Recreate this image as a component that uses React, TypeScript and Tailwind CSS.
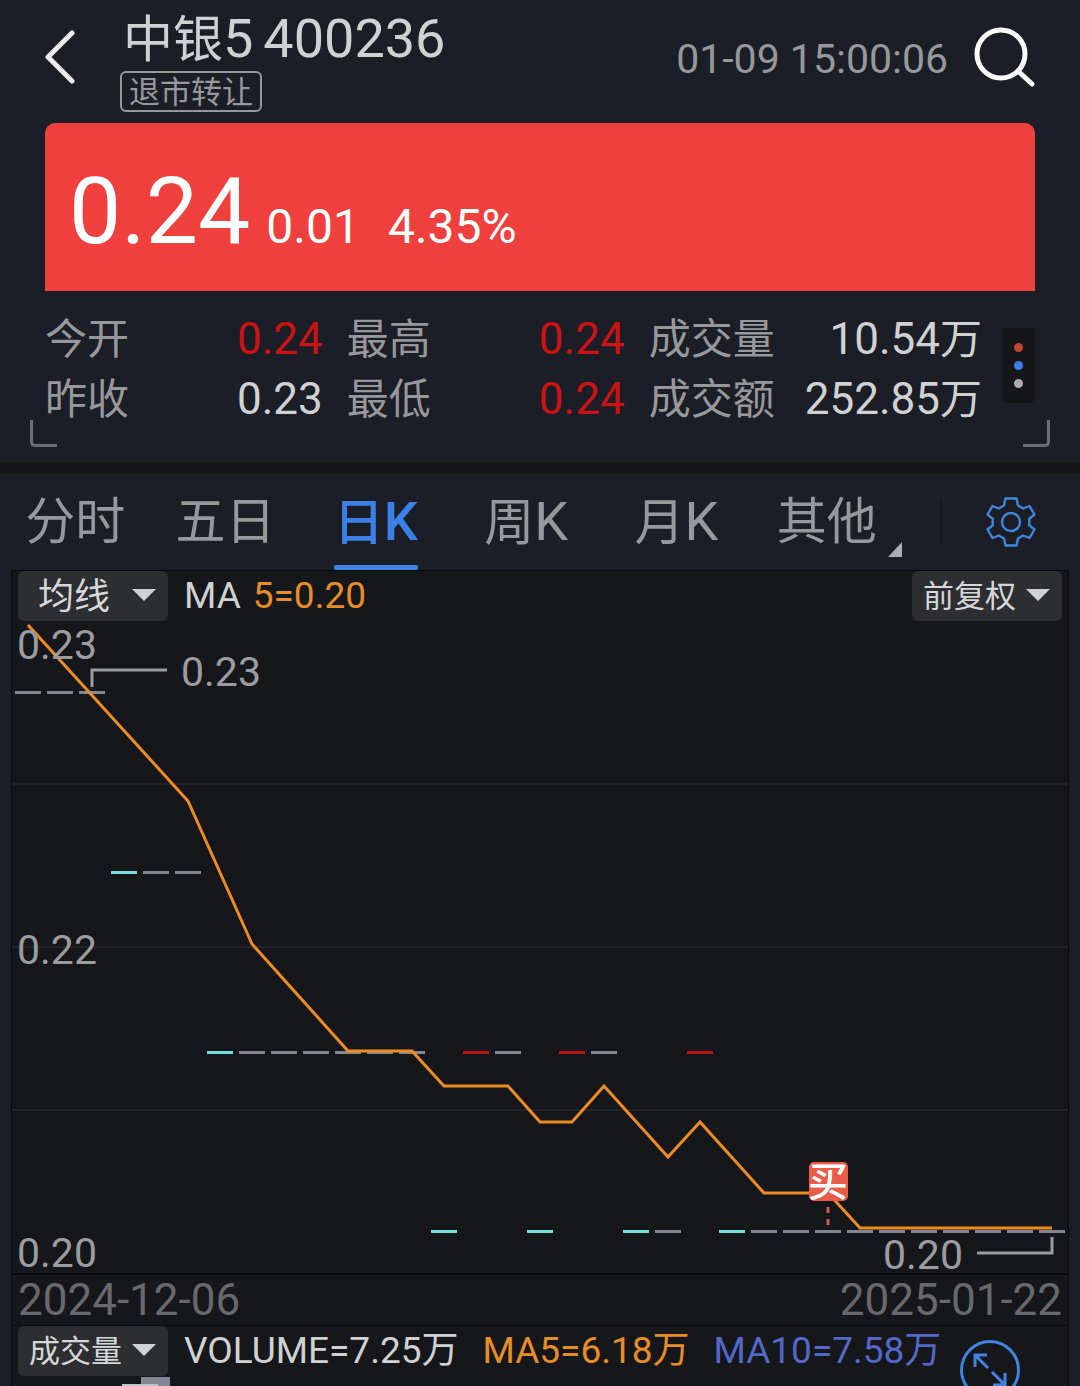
import React from "react";

type Tone = "flat" | "down" | "up";

const toneColor: Record<Tone, string> = {
  flat: "#858894",
  down: "#74dcdd",
  up: "#b81519",
};

// One entry per trading day: [price level, tone]
const sessions: [number, Tone][] = [
  [692, "flat"], [692, "flat"], [692, "flat"],
  [872, "down"], [872, "flat"], [872, "flat"],
  [1052, "down"], [1052, "flat"], [1052, "flat"], [1052, "flat"],
  [1052, "flat"], [1052, "flat"], [1052, "flat"],
  [1231, "down"], [1052, "up"], [1052, "flat"],
  [1231, "down"], [1052, "up"], [1052, "flat"],
  [1231, "down"], [1231, "flat"], [1052, "up"],
  [1231, "down"], [1231, "flat"], [1231, "flat"], [1231, "flat"],
  [1231, "flat"], [1231, "flat"], [1231, "flat"], [1231, "flat"],
  [1231, "flat"], [1231, "flat"], [1231, "flat"],
];

const ma5 =
  "28,625 188,801 252,944 348,1051 412,1051 444,1086 508,1086 540,1122 572,1122 604,1086 668,1157 700,1122 764,1193 828,1193 860,1228 1052,1228";

function Header() {
  return (
    <header className="flex h-[123px] items-start px-[45px]">
      <button aria-label="返回" className="mt-[28px] h-[58px] w-[75px]">
        <svg viewBox="0 0 75 58" className="h-[58px] w-[75px]" fill="none" stroke="#ececee" strokeWidth="5" strokeLinecap="round" strokeLinejoin="round">
          <path d="M27 5 L3 29 L27 53" />
        </svg>
      </button>
      <div className="flex flex-1 flex-col items-start">
        <h1 className="flex h-[71px] items-baseline gap-[10px] pl-[3px] text-[54px] leading-[78px] text-[#d0d1d3]">
          <span>
            <span className="text-[50px]">中银</span>5
          </span>
          <span>400236</span>
        </h1>
        <span className="rounded-[6px] border-2 border-[#97989c] px-[7px] pt-[2px] text-[31px] leading-[35px] text-[#97989c]">退市转让</span>
      </div>
      <time className="mr-[26px] text-[41px] leading-[118px] text-[#97989c]">01-09 15:00:06</time>
      <button aria-label="搜索" className="mt-[27px] h-[60px] w-[61px]">
        <svg viewBox="0 0 61 60" className="h-[60px] w-[61px]" fill="none" stroke="#ffffff" strokeWidth="5" strokeLinecap="round">
          <circle cx="27" cy="27" r="24" />
          <path d="M44 44 L58 57" />
        </svg>
      </button>
    </header>
  );
}

function PriceBanner() {
  return (
    <div className="mx-[45px] flex h-[168px] items-baseline rounded-t-[10px] bg-[#ef403d] pl-6 leading-[178px] text-white">
      <span className="text-[93px]">0.24</span>
      <span className="ml-4 text-[48px]">0.01</span>
      <span className="ml-7 text-[48px]">4.35%</span>
    </div>
  );
}

function Stat({ label, value, unit, red }: { label: string; value: string; unit?: string; red?: boolean }) {
  return (
    <div className="flex h-[60px] items-baseline justify-between leading-[60px]">
      <dt className="text-[42px] text-[#97989c]">{label}</dt>
      <dd className={red ? "text-[44px] text-[#cb1316]" : "text-[44px] text-[#d0d1d3]"}>
        {value}
        {unit && <span className="text-[42px]">{unit}</span>}
      </dd>
    </div>
  );
}

function Stats() {
  return (
    <section className="relative flex items-start px-[45px] pt-[18px] pb-[33px]">
      <dl className="grid flex-1 grid-cols-[5fr_5fr_6fr] gap-x-6">
        <Stat label="今开" value="0.24" red />
        <Stat label="最高" value="0.24" red />
        <Stat label="成交量" value="10.54" unit="万" />
        <Stat label="昨收" value="0.23" />
        <Stat label="最低" value="0.24" red />
        <Stat label="成交额" value="252.85" unit="万" />
      </dl>
      <button aria-label="更多" className="mt-[19px] ml-5 flex h-[75px] w-[33px] flex-col items-center justify-center gap-[9px] rounded-[5px] bg-[#15161a]">
        <i className="size-[9px] rounded-full bg-[#c0442f]" />
        <i className="size-[9px] rounded-full bg-[#3a80e6]" />
        <i className="size-[9px] rounded-full bg-[#acadb0]" />
      </button>
      <i className="absolute bottom-[15px] left-[30px] size-[27px] rounded-bl-[5px] border-b-[3px] border-l-[3px] border-[#6c6e75]" />
      <i className="absolute right-[30px] bottom-[15px] size-[27px] rounded-br-[5px] border-r-[3px] border-b-[3px] border-[#6c6e75]" />
    </section>
  );
}

const tabs: { text: string; k?: boolean; active?: boolean; more?: boolean }[] = [
  { text: "分时" },
  { text: "五日" },
  { text: "日", k: true, active: true },
  { text: "周", k: true },
  { text: "月", k: true },
  { text: "其他", more: true },
];

function PeriodTabs() {
  return (
    <nav className="box-content flex h-24 items-center border-t-12 border-[#15161a]">
      <div className="grid h-24 flex-1 grid-cols-6">
        {tabs.map((t) => (
          <button
            key={t.text}
            className={
              t.active
                ? "relative flex h-24 items-baseline justify-center text-[50px] leading-[96px] font-medium text-[#3a80e6]"
                : "relative flex h-24 items-baseline justify-center text-[50px] leading-[96px] text-[#97989c]"
            }
          >
            {t.text}
            {t.k && <span className="text-[54px]">K</span>}
            {t.active && <i className="absolute bottom-0 h-[5px] w-[84px] rounded-[2px] bg-[#3f85e4]" />}
            {t.more && (
              <svg viewBox="0 0 14 15" className="absolute right-0 bottom-[13px] h-[15px] w-[14px]" fill="#acadb0">
                <path d="M14 0 V15 H0 Z" />
              </svg>
            )}
          </button>
        ))}
      </div>
      <div className="flex w-[178px] items-center">
        <i className="ml-[38px] h-[45px] w-[2px] bg-[#15171c]" />
        <button aria-label="设置" className="ml-[44px] size-[50px]">
          <svg viewBox="0 0 50 50" className="size-[50px]" fill="none" stroke="#4185dd" strokeWidth="2.4" strokeLinejoin="round">
            <path d="M19.5 1.5 H30.5 L32 8.500 Q35 10 37 11.500 L43.5 9 L48.5 17.500 L43 22 Q43.8 25 43 28 L48.500 32.500 L43.500 41 L37 38.500 Q35 40 32 41.500 L30.500 48.500 H19.500 L18 41.500 Q15 40 13 38.500 L6.500 41 L1.500 32.500 L7 28 Q6.200 25 7 22 L1.500 17.500 L6.500 9 L13 11.500 Q15 10 18 8.500 Z" />
            <circle cx="25" cy="25" r="9" />
          </svg>
        </button>
      </div>
    </nav>
  );
}

function Picker({ label, value, small }: { label: string; value: string; small?: boolean }) {
  return (
    <div className="relative h-[50px] w-[150px] shrink-0">
      <select
        aria-label={label}
        className={
          small
            ? "block h-[50px] w-full appearance-none rounded-[6px] bg-[#2d2e32] pt-px pl-[11px] text-[31px] text-[#d6d7d9]"
            : "block h-[50px] w-full appearance-none rounded-[6px] bg-[#2d2e32] pt-px pl-5 text-[36px] text-[#d6d7d9]"
        }
      >
        <option>{value}</option>
      </select>
      <svg viewBox="0 0 24 12" className="pointer-events-none absolute top-[18px] right-3 h-3 w-6" fill="#d0d1d3">
        <path d="M0 0 H24 L12 12 Z" />
      </svg>
    </div>
  );
}

function PriceChart() {
  return (
    <svg viewBox="12 621 1056 652" className="block h-auto w-full overflow-visible" role="img" aria-label="日K" fontSize="41">
      <g stroke="#212328" strokeWidth="2">
        <path d="M12 784 H1068 M12 947 H1068 M12 1110 H1068" />
      </g>
      {sessions.map(([y, tone], i) => (
        <rect key={i} x={15 + i * 32} y={y - 1} width="26" height="3" fill={toneColor[tone]} />
      ))}
      <polyline points={ma5} fill="none" stroke="#ee8c24" strokeWidth="3" />
      <g fill="none" stroke="#9c9da1" strokeWidth="3">
        <path d="M92 687 V670 H167" />
        <path d="M977 1253 H1052 V1237" />
      </g>
      <g fill="#9c9da1">
        <text x="17" y="659">0.23</text>
        <text x="181" y="686">0.23</text>
        <text x="17" y="964">0.22</text>
        <text x="17" y="1267">0.20</text>
        <text x="883" y="1269">0.20</text>
      </g>
      <path d="M828 1207 V1225" stroke="#cf5a4a" strokeWidth="3" strokeDasharray="6 6" />
      <rect x="809" y="1162" width="39" height="39" rx="5" fill="#ea5c48" />
      <text x="828" y="1196" fontSize="40" fontWeight="500" fill="#ffffff" textAnchor="middle">买</text>
    </svg>
  );
}

export default function App() {
  return (
    <div className="min-h-screen overflow-hidden bg-[#1b1e26] font-[Roboto,'Noto_Sans_CJK_SC',sans-serif]">
      <Header />
      <PriceBanner />
      <Stats />
      <PeriodTabs />
      <main className="mx-[11px] overflow-hidden border border-[#0a0b0e] bg-[#15171b]">
        <div className="flex items-center px-[6px] text-[37px] leading-[50px]">
          <Picker label="指标" value="均线" />
          <span className="ml-4 text-[#d0d1d3]">MA</span>
          <span className="ml-3 flex-1 text-[#e88c28]">5=0.20</span>
          <Picker label="复权" value="前复权" small />
        </div>
        <PriceChart />
        <div className="flex justify-between border-t-2 border-b border-[#0a0b0e] px-[6px] text-[44px] leading-[50px] text-[#68696d]">
          <time>2024-12-06</time>
          <time>2025-01-22</time>
        </div>
        <section className="relative h-[60px] overflow-hidden">
          <div className="flex h-[50px] items-center px-[6px] text-[37px] leading-[50px]">
            <Picker label="副图" value="成交量" small />
            <span className="ml-4 text-[#d0d1d3]">VOLUME=7.25万</span>
            <span className="ml-6 text-[#e88c28]">MA5=6.18万</span>
            <span className="ml-6 text-[#5468c8]">MA10=7.58万</span>
          </div>
          <svg viewBox="0 0 60 10" className="ml-[110px] h-[10px] w-[60px]">
            <path d="M19 1 H48 V10 H19 Z" fill="#858894" />
            <path d="M0 9 H36" stroke="#c0c1c4" strokeWidth="2" />
          </svg>
          <button aria-label="全屏" className="absolute top-[14px] right-[48px] size-[60px]">
            <svg viewBox="0 0 60 60" className="size-[60px]" fill="none" stroke="#3f85e0" strokeWidth="3">
              <circle cx="30" cy="30" r="28.500" />
              <path d="M28 28 L15 15 M15 27 V15 H27 M32 32 L45 45 M45 33 V45 H33" />
            </svg>
          </button>
        </section>
      </main>
    </div>
  );
}
